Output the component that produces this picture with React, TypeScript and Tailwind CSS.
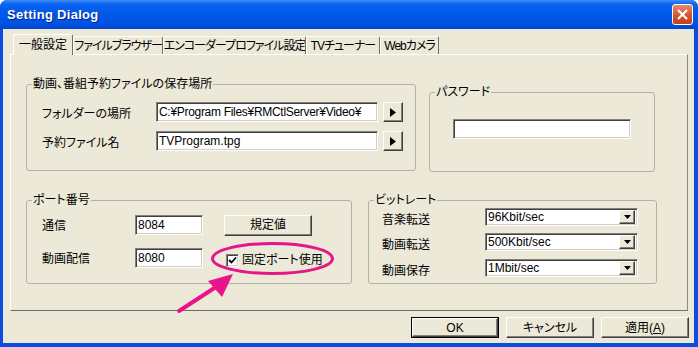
import type { ReactNode } from "react";

const sunken =
  "border border-t-[#808080] border-l-[#808080] border-b-white border-r-white shadow-[inset_1px_1px_0_#404040,inset_-1px_-1px_0_#d4d0c8] bg-white";
const raised =
  "border border-t-white border-l-white border-b-[#404040] border-r-[#404040] shadow-[inset_-1px_-1px_0_#808080] bg-[#ece9d8]";

const tabs = [
  { label: "一般設定", w: "w-[60px]", active: true },
  { label: "ファイルブラウザー", w: "w-[90px]", active: false },
  { label: "エンコーダープロファイル設定", w: "w-[143px]", active: false },
  { label: "TVチューナー", w: "w-[74px]", active: false },
  { label: "Webカメラ", w: "w-[59px]", active: false },
];

const bitrates = [
  { label: "音楽転送", value: "96Kbit/sec", mt: "mt-[1px]" },
  { label: "動画転送", value: "500Kbit/sec", mt: "mt-[7px]" },
  { label: "動画保存", value: "1Mbit/sec", mt: "mt-[8px]" },
];

/** グループボックス */
function Group({
  title,
  className,
  children,
}: {
  title: string;
  className: string;
  children: ReactNode;
}) {
  return (
    <fieldset className={`border border-[#b3b0a2] rounded-[3px] ${className}`}>
      <legend className="ml-[5px] px-[1px] text-[12px] leading-[14px] text-black whitespace-nowrap">
        {title}
      </legend>
      {children}
    </fieldset>
  );
}

function ArrowButton() {
  return (
    <button
      type="button"
      className={`${raised} ml-[5px] w-[20px] h-[20px] flex items-center justify-center`}
    >
      <svg width="6" height="9" viewBox="0 0 6 9">
        <path d="M0 0 L6 4.5 L0 9 Z" fill="#000" />
      </svg>
    </button>
  );
}

function Select({ value }: { value: string }) {
  return (
    <div className={`${sunken} w-[153px] h-[18px] flex items-center justify-between pl-[2px] pr-[2px]`}>
      <span className="text-[12px] leading-[14px]">{value}</span>
      <div className={`${raised} w-[16px] h-[14px] flex items-center justify-center`}>
        <svg width="7" height="4" viewBox="0 0 7 4">
          <path d="M0 0 L7 0 L3.5 4 Z" fill="#000" />
        </svg>
      </div>
    </div>
  );
}

export default function App() {
  return (
    <div className="relative w-[698px] h-[347px] rounded-t-[7px] overflow-hidden bg-[#0a4ee0] flex flex-col font-['Liberation_Sans','Noto_Sans_CJK_JP',sans-serif] [font-feature-settings:'palt'] text-black">
      {/* タイトルバー */}
      <div className="h-[29px] shrink-0 flex items-center justify-between pl-[7px] pr-[5px] bg-[linear-gradient(to_bottom,#3d8ff9_0%,#0a64f0_14%,#0058e6_50%,#0054e3_80%,#0046cf_100%)]">
        <span className="text-white font-bold text-[13px] tracking-[0.3px] [text-shadow:1px_1px_#0a1f8a]">
          Setting Dialog
        </span>
        <div className="w-[21px] h-[21px] rounded-[3px] border border-white bg-[linear-gradient(to_bottom,#ea8a6a,#d4502a_60%,#c2401c)] flex items-center justify-center">
          <svg width="11" height="11" viewBox="0 0 11 11">
            <path d="M1 1 L10 10 M10 1 L1 10" stroke="#fff" strokeWidth="2.2" />
          </svg>
        </div>
      </div>

      {/* クライアント領域 */}
      <div className="flex-1 ml-[3px] mr-[4px] mb-[4px] bg-[#ece9d8] flex flex-col">
        {/* タブ */}
        <div className="h-[25px] flex items-end pl-[10px]">
          {tabs.map((tab) =>
            tab.active ? (
              <div
                key={tab.label}
                className={`${tab.w} h-[21px] -mb-[1px] relative z-10 bg-[#ece9d8] border-t border-l border-white border-r border-r-[#716f64] rounded-t-[2px] flex items-center justify-center text-[12px] leading-[14px] whitespace-nowrap`}
              >
                {tab.label}
              </div>
            ) : (
              <div
                key={tab.label}
                className={`${tab.w} h-[18px] border-t border-l border-white border-r border-r-[#716f64] rounded-t-[2px] flex items-center justify-center text-[12px] leading-[14px] tracking-[-1px] whitespace-nowrap overflow-hidden`}
              >
                {tab.label}
              </div>
            ),
          )}
        </div>

        {/* タブパネル */}
        <div className="ml-[7px] w-[678px] h-[257px] border-t border-l border-white border-r border-r-[#8c8a7e] border-b border-b-[#6f6d62] pl-[15px] pt-[22px]">
          <div className="flex items-start">
            <Group title="動画、番組予約ファイルの保存場所" className="w-[390px] h-[94px]">
              <div className="mt-[11px] flex items-center h-[20px] pl-[15px]">
                <span className="w-[114px] text-[12px] leading-[14px] pt-[3px]">フォルダーの場所</span>
                <div className={`${sunken} w-[222px] h-[20px] pl-[2px] flex items-center text-[12px] leading-[14px] tracking-[-0.3px] whitespace-nowrap`}>
                  C:¥Program Files¥RMCtlServer¥Video¥
                </div>
                <ArrowButton />
              </div>
              <div className="mt-[9px] flex items-center h-[20px] pl-[15px]">
                <span className="w-[114px] text-[12px] leading-[14px] pt-[3px]">予約ファイル名</span>
                <div className={`${sunken} w-[222px] h-[20px] pl-[2px] flex items-center text-[12px] leading-[14px]`}>
                  TVProgram.tpg
                </div>
                <ArrowButton />
              </div>
            </Group>
            <Group title="パスワード" className="ml-[13px] mt-[8px] w-[226px] h-[87px]">
              <div className={`${sunken} mt-[20px] ml-[23px] w-[178px] h-[20px]`} />
            </Group>
          </div>

          <div className="mt-[21px] flex items-start">
            <Group title="ポート番号" className="w-[326px] h-[91px]">
              <div className="mt-[8px] flex items-center h-[20px] pl-[15px]">
                <span className="w-[93px] text-[12px] leading-[14px] pt-[2px]">通信</span>
                <div className={`${sunken} w-[68px] h-[20px] pl-[2px] flex items-center text-[12px] leading-[14px]`}>
                  8084
                </div>
                <button
                  type="button"
                  className={`${raised} ml-[21px] w-[88px] h-[21px] text-[12px] leading-[14px]`}
                >
                  規定値
                </button>
              </div>
              <div className="mt-[13px] flex items-center h-[20px] pl-[15px]">
                <span className="w-[93px] text-[12px] leading-[14px] pt-[2px]">動画配信</span>
                <div className={`${sunken} w-[68px] h-[20px] pl-[2px] flex items-center text-[12px] leading-[14px]`}>
                  8080
                </div>
                <div className="ml-[23px] mt-[4px] flex items-center">
                  <div className={`${sunken} w-[13px] h-[13px] flex items-center justify-center`}>
                    <svg width="9" height="9" viewBox="0 0 9 9">
                      <path d="M1 4 L3.5 6.5 L8 1.5" stroke="#000" strokeWidth="1.8" fill="none" />
                    </svg>
                  </div>
                  <span className="ml-[3px] text-[12px] leading-[14px]">固定ポート使用</span>
                </div>
              </div>
            </Group>
            <Group title="ビットレート" className="ml-[16px] w-[289px] h-[91px]">
              {bitrates.map((b) => (
                <div key={b.label} className={`${b.mt} flex items-center h-[18px] pl-[13px]`}>
                  <span className="w-[103px] text-[12px] leading-[14px] pt-[5px]">{b.label}</span>
                  <Select value={b.value} />
                </div>
              ))}
            </Group>
          </div>
        </div>

        {/* ボタン */}
        <div className="mt-[6px] flex justify-end pr-[5px] gap-[7px]">
          <div className="border border-black">
            <button type="button" className={`${raised} w-[86px] h-[19px] text-[12px] leading-[14px] block`}>
              OK
            </button>
          </div>
          <button type="button" className={`${raised} w-[88px] h-[21px] text-[12px] leading-[14px]`}>
            キャンセル
          </button>
          <button type="button" className={`${raised} w-[88px] h-[21px] text-[12px] leading-[14px]`}>
            適用(<span className="underline">A</span>)
          </button>
        </div>
      </div>

      {/* 注釈 */}
      <svg className="absolute inset-0 pointer-events-none" width="698" height="347" viewBox="0 0 698 347">
        <ellipse cx="272.5" cy="258.5" rx="60" ry="15" fill="none" stroke="#e8158a" strokeWidth="3" />
        <path d="M179 311 L219 285" stroke="#e8158a" strokeWidth="4" strokeLinecap="round" />
        <path d="M233 274 L208 281 L222 297 Z" fill="#e8158a" />
      </svg>
    </div>
  );
}
